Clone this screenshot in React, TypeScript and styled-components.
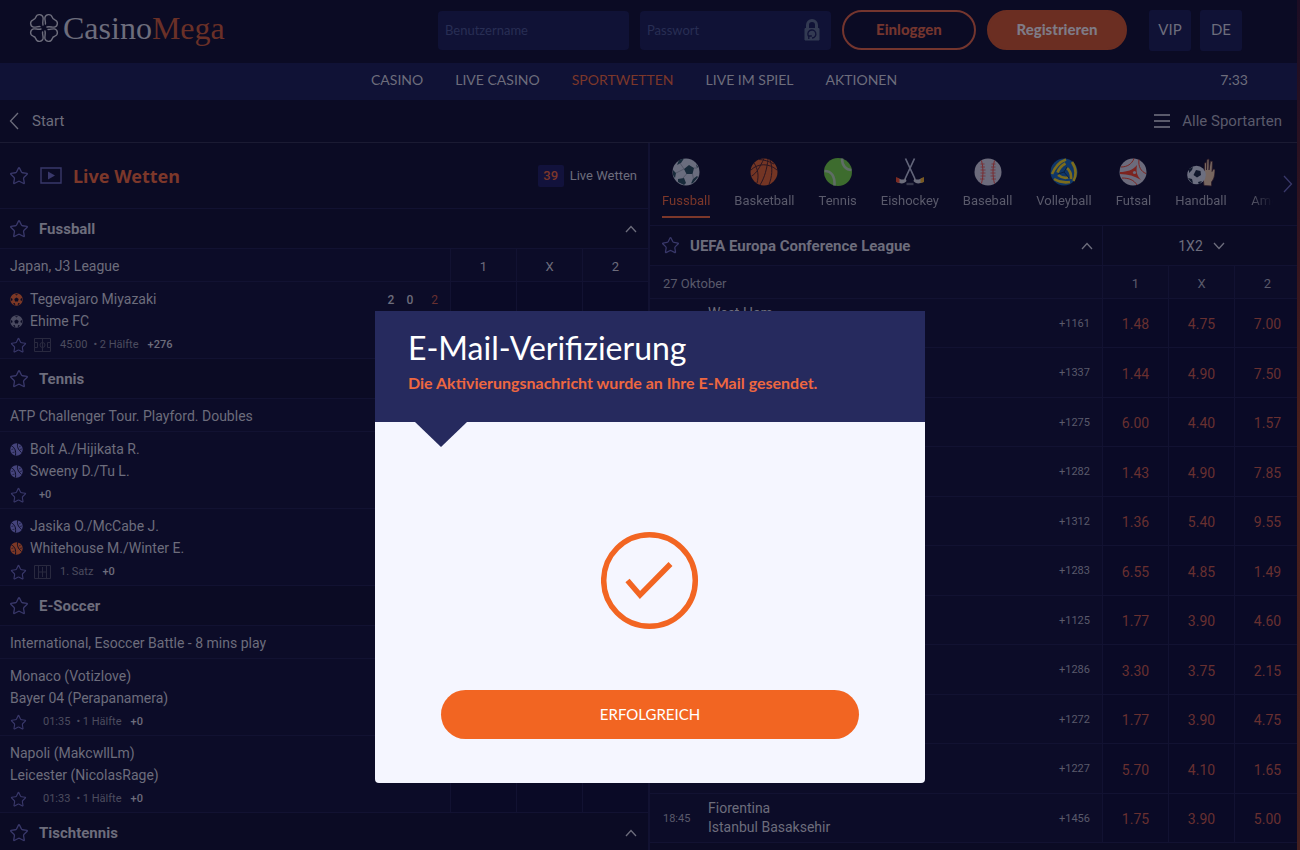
import React from "react";
import styled, { createGlobalStyle, css } from "styled-components";
import { Star } from "lucide-react";

const c = {
  page: "#0b0b24",
  nav: "#101236",
  panel: "#0c0c28",
  odds: "#0a0a26",
  line: "#121232",
  rule: "#1b1b33",
  text: "#6d6d7c",
  soft: "#5a5a6b",
  faint: "#4c4c5f",
  violet: "#39386a",
  orange: "#7c372a",
  odd: "#683030",
  accent: "#f26522",
};

const display = `Lato, "Open Sans", sans-serif`;

const GlobalStyle = createGlobalStyle`
  *, *::before, *::after { box-sizing: border-box; }
  body {
    margin: 0;
    background: ${c.page};
    color: ${c.text};
    font-family: Roboto, "Liberation Sans", sans-serif;
    font-size: 14px;
    overflow: hidden;
  }
  button, input { font: inherit; color: inherit; }
  button { padding: 0; border: 0; background: none; cursor: pointer; }
  a { color: inherit; text-decoration: none; }
  h1, h2, h3, p, ul { margin: 0; padding: 0; }
  ul { list-style: none; }
  svg { display: block; flex: none; }
`;

const Page = styled.div`
  min-height: 100vh;
`;

/* ---------- header ---------- */

const Header = styled.header`
  display: flex;
  align-items: center;
  height: 63px;
  padding: 0 58px 3px 29px;
`;

const Logo = styled.a`
  display: flex;
  align-items: center;
  gap: 4px;
  padding-bottom: 4px;
  font-family: "Liberation Serif", serif;
  font-size: 32px;
  line-height: 40px;
  span span { color: #6a3027; }
`;

const LoginForm = styled.form`
  display: flex;
  align-items: center;
  gap: 11px;
  margin-left: auto;
`;

const Field = styled.label`
  display: flex;
  align-items: center;
  width: 191px;
  height: 39px;
  padding: 0 11px 0 7px;
  border-radius: 4px;
  background: ${c.nav};
  color: #333a52;
  input {
    flex: 1;
    min-width: 0;
    padding: 0;
    border: 0;
    outline: 0;
    background: transparent;
    font-family: ${display};
    font-size: 13px;
  }
  input::placeholder { color: #282e54; opacity: 1; }
`;

const PillButton = styled.button<{ $width: number; $filled?: boolean }>`
  width: ${(p) => p.$width}px;
  height: 40px;
  padding-bottom: 2px;
  border: 2px solid ${(p) => (p.$filled ? "#6b2e22" : "#74352e")};
  border-radius: 20px;
  background: ${(p) => (p.$filled ? "#6b2e22" : "transparent")};
  color: ${(p) => (p.$filled ? "#7f7b86" : "#74352e")};
  font-family: ${display};
  font-size: 15px;
  font-weight: 900;
`;

const SquareLinks = styled.div`
  display: flex;
  gap: 9px;
  margin-left: 22px;
`;

const SquareButton = styled.button`
  width: 42px;
  height: 41px;
  padding-bottom: 2px;
  border-radius: 3px;
  background: ${c.nav};
  font-family: ${display};
  font-size: 15px;
`;

const NavBar = styled.div`
  display: flex;
  align-items: center;
  height: 37px;
  padding: 0 52px 5px 48px;
  background: ${c.nav};
  font-family: ${display};
  font-size: 14px;
`;

const NavList = styled.nav`
  display: flex;
  flex: 1;
  justify-content: center;
  gap: 32px;
`;

const NavLink = styled.a<{ $active?: boolean }>`
  color: ${(p) => (p.$active ? c.orange : c.text)};
`;

const SubBar = styled.div`
  display: flex;
  align-items: center;
  justify-content: space-between;
  height: 43px;
  padding: 0 18px 0 9px;
  border-bottom: 1px solid ${c.rule};
  font-size: 15px;
`;

const SubLink = styled.button<{ $soft?: boolean }>`
  display: flex;
  align-items: center;
  gap: ${(p) => (p.$soft ? 12 : 13)}px;
  color: ${(p) => (p.$soft ? c.soft : c.text)};
`;

/* ---------- panels ---------- */

const Columns = styled.main`
  display: grid;
  grid-template-columns: 1fr 1fr;
`;

const Panel = styled.section<{ $divided?: boolean }>`
  min-width: 0;
  ${(p) => p.$divided && css`border-right: 2px solid ${c.line};`}
`;

const LiveHead = styled.div`
  display: flex;
  align-items: center;
  gap: 11px;
  height: 66px;
  padding: 0 11px 0 9px;
  border-bottom: 1px solid ${c.line};
  h2 {
    flex: 1;
    color: ${c.orange};
    font-family: "Noto Sans", sans-serif;
    font-size: 18px;
    font-weight: 700;
    line-height: 24px;
  }
`;

const LiveCount = styled.span`
  display: flex;
  align-items: center;
  gap: 6px;
  font-size: 13px;
  b {
    width: 26px;
    border-radius: 2px;
    background: #12123c;
    color: ${c.orange};
    line-height: 22px;
    text-align: center;
    font-weight: 500;
  }
`;

const StarButton = styled.button`
  color: ${c.violet};
`;

const SectionHead = styled.div`
  display: flex;
  align-items: center;
  gap: 10px;
  height: 40px;
  padding: 1px 11px 0 9px;
  border-bottom: 1px solid ${c.line};
  h3 {
    flex: 1;
    font-size: 15px;
    font-weight: 700;
  }
`;

const Table = styled.table`
  width: 100%;
  table-layout: fixed;
  border-spacing: 0;
  background: ${c.panel};
  th, td {
    padding: 0;
    border-bottom: 1px solid ${c.line};
    font-weight: 400;
  }
`;

const OddCol = styled.col`
  width: 66px;
`;

const HeadRow = styled.tr<{ $dated?: boolean }>`
  height: 33px;
  th { padding-top: 2px; font-size: 13px; text-align: center; }
  th + th { border-left: 1px solid ${c.line}; }
  th:first-child {
    padding-left: ${(p) => (p.$dated ? 13 : 10)}px;
    font-size: ${(p) => (p.$dated ? 13 : 14)}px;
    text-align: left;
  }
  ${(p) => p.$dated && css`color: ${c.soft};`}
`;

const MatchRow = styled.tr`
  height: 77px;
  td { vertical-align: top; }
  td + td { border-left: 1px solid ${c.line}; background: ${c.odds}; }
`;

const MatchCell = styled.div`
  display: flex;
  justify-content: space-between;
  padding: 6px 12px 0 10px;
`;

const Team = styled.div`
  display: flex;
  align-items: center;
  gap: 7px;
  font-size: 14px;
  line-height: 22px;
`;

const Info = styled.div`
  display: flex;
  align-items: center;
  height: 26px;
  color: ${c.faint};
  font-size: 11px;
  line-height: 26px;
  time { margin-right: 6px; }
`;

const InfoText = styled.span<{ $indent: number }>`
  margin-left: ${(p) => p.$indent}px;
`;

const More = styled.b<{ $indent?: number }>`
  margin-left: ${(p) => p.$indent ?? 9}px;
  color: ${c.text};
  font-weight: 500;
`;

const PitchWrap = styled.span`
  margin-left: 7px;
`;

const Score = styled.div`
  display: flex;
  gap: 12px;
  font-size: 12px;
  font-weight: 500;
  line-height: 24px;
  span:last-child { margin-left: 6px; color: ${c.odd}; font-weight: 400; }
`;

/* ---------- sport tabs ---------- */

const SportBar = styled.div`
  display: flex;
  height: 83px;
  padding: 0 7px 0 12px;
  border-bottom: 1px solid ${c.line};
`;

const SportList = styled.ul`
  display: flex;
  flex: 1;
  min-width: 0;
  gap: 24px;
  overflow: hidden;
  mask-image: linear-gradient(to right, #000 calc(100% - 32px), transparent calc(100% - 10px));
`;

const SportTab = styled.button<{ $active?: boolean }>`
  display: flex;
  flex-direction: column;
  align-items: center;
  height: 75px;
  padding-top: 14px;
  border-bottom: 2px solid ${(p) => (p.$active ? c.orange : "transparent")};
  color: ${(p) => (p.$active ? c.orange : c.soft)};
  font-size: 13px;
  line-height: 28px;
`;

const NextButton = styled.button`
  color: ${c.violet};
`;

const LeagueHead = styled.div`
  display: flex;
  height: 40px;
  border-bottom: 1px solid ${c.line};
`;

const LeagueTitle = styled.div`
  display: flex;
  flex: 1;
  align-items: center;
  gap: 10px;
  padding: 0 9px 0 11px;
  h3 {
    flex: 1;
    font-size: 15px;
    font-weight: 700;
  }
`;

const MarketSelect = styled.button`
  display: flex;
  align-items: center;
  justify-content: center;
  gap: 10px;
  width: 198px;
  border-left: 1px solid ${c.line};
`;

const LeagueRow = styled.tr`
  height: 49px;
  &:nth-child(even) { height: 50px; }
  td + td { border-left: 1px solid ${c.line}; background: ${c.odds}; text-align: center; }
`;

const Fixture = styled.div`
  display: flex;
  align-items: center;
  padding: 0 12px 0 13px;
`;

const Kickoff = styled.time`
  width: 45px;
  color: ${c.soft};
  font-size: 11px;
`;

const Teams = styled.div`
  flex: 1;
  height: 38px;
  line-height: 19px;
`;

const MoreMarkets = styled.a`
  color: ${c.soft};
  font-size: 11px;
`;

const Odd = styled.button`
  padding-top: 2px;
  color: ${c.odd};
  font-size: 14px;
  line-height: 24px;
`;

const PageEdge = styled.div`
  position: fixed;
  top: 0;
  right: 0;
  bottom: 0;
  width: 3px;
  background: linear-gradient(#1d0d24, #35151f 30%, #4a1f1b 50%, #45201f);
`;

/* ---------- dialog ---------- */

const Backdrop = styled.div`
  position: fixed;
  inset: 0;
  display: flex;
  align-items: flex-start;
  justify-content: center;
  padding: 311px 16px 16px;
`;

const Dialog = styled.section`
  width: 100%;
  max-width: 550px;
  border-radius: 0 0 4px 4px;
  background: #f5f6ff;
`;

const DialogHead = styled.header`
  position: relative;
  height: 111px;
  padding: 17px 33px 0;
  background: #262a5e;
  color: #fff;
  font-family: ${display};
  &::after {
    content: "";
    position: absolute;
    top: 100%;
    left: 40px;
    border: solid transparent;
    border-width: 25px 26px 0;
    border-top-color: #262a5e;
  }
  h1 {
    font-size: 32px;
    font-weight: 400;
    line-height: 40px;
  }
  p {
    color: #ee6740;
    font-size: 16px;
    font-weight: 700;
    line-height: 30px;
  }
`;

const DialogBody = styled.div`
  display: flex;
  flex-direction: column;
  align-items: center;
  gap: 60px;
  padding: 109px 66px 44px;
`;

const ConfirmButton = styled.button`
  width: 100%;
  height: 49px;
  padding-bottom: 2px;
  border-radius: 25px;
  background: ${c.accent};
  color: #fff;
  font-family: ${display};
  font-size: 15px;
`;

/* ---------- drawings ---------- */

const leaf =
  "M-1-3C-1.800-6-.6-8-.9-10.400C-1.700-14-7-14.600-8.200-10.800C-8.500-9.500-9.500-8.500-10.800-8.200C-14.600-7-14-1.700-10.400-.9C-8-.6-6-1.800-4-1.400";

const Clover = () => (
  <svg width="30" height="30" viewBox="-15 -15 30 30" fill="none" stroke={c.text} strokeWidth="1.400" strokeLinecap="round">
    {[0, 90, 180, 270].map((a) => (
      <path key={a} d={leaf} transform={`rotate(${a})`} />
    ))}
  </svg>
);

const chevrons = {
  left: { w: 10, h: 18, d: "M9 1L1.500 9 9 17" },
  right: { w: 10, h: 18, d: "M1 1l7.500 8L1 17" },
  up: { w: 12, h: 8, d: "M1 7l5-5.500L11 7" },
  down: { w: 12, h: 8, d: "M1 1l5 5.500L11 1" },
};

const Chevron = ({ to }: { to: keyof typeof chevrons }) => {
  const { w, h, d } = chevrons[to];
  return (
    <svg width={w} height={h} viewBox={`0 0 ${w} ${h}`} fill="none" stroke="currentColor" strokeWidth="1.300">
      <path d={d} />
    </svg>
  );
};

const MenuLines = () => (
  <svg width="16" height="14" viewBox="0 0 16 14" fill="currentColor">
    <path d="M0 0h16v2H0zM0 6h16v2H0zM0 12h16v2H0z" />
  </svg>
);

const Lock = () => (
  <svg width="16" height="22" viewBox="0 0 16 22" fill="none" stroke="currentColor">
    <path d="M3.500 10V6a4.500 4.500 0 0 1 9 0v4" strokeWidth="3" />
    <path d="M1 9.500h14v11.500H1z" fill="currentColor" />
    <path d="M5.200 18A4 4 0 1 1 8 19M4.800 20v-3h3" stroke={c.nav} strokeWidth="1.300" />
  </svg>
);

const PlayBox = () => (
  <svg width="22" height="18" viewBox="0 0 22 18" fill="none" stroke={c.violet} strokeWidth="1.400">
    <path d="M1 1h20v15H1z" />
    <path d="M8 4.500l7 4-7 4z" fill={c.violet} stroke="none" />
  </svg>
);

const Pitch = ({ kind }: { kind: "soccer" | "tennis" }) => (
  <PitchWrap>
    <svg width="17" height="14" viewBox="0 0 17 14" fill="none" stroke="#29293f">
      <path d="M.5.5h16v13H.5z" />
      {kind === "soccer" ? (
        <>
          <path d="M8.500 0v14M.5 4.500h3v5h-3M16.500 4.500h-3v5h3" />
          <circle cx="8.500" cy="7" r="2.500" />
        </>
      ) : (
        <path d="M4.500 0v14M12.500 0v14M8.500 2v10M4.500 7h8" />
      )}
    </svg>
  </PitchWrap>
);

type BallKind = "soccer" | "tennis";

const SmallBall = ({ kind, color }: { kind: BallKind; color: string }) => (
  <svg width="13" height="13" viewBox="0 0 13 13" fill="none">
    <circle cx="6.500" cy="6.500" r="6.200" fill={color} />
    {kind === "soccer" ? (
      <g fill={c.page}>
        <path d="M6.500 4.400l2.200 1.600-.8 2.500H5.100L4.300 6z" />
        <path d="M5 1.200h3L6.500 2.600zM1 5l1.600 1L2 8.200.8 7zM12 5l-1.600 1 .6 2.200L12.200 7zM3 10.500l1.600-.6.8 1.600-.8.6zM10 10.500l-1.600-.6-.8 1.600.8.6z" />
      </g>
    ) : (
      <g stroke={c.page} strokeWidth="1">
        <path d="M1.500 3c3.500 1.500 4.500 5 4 9.500M8 0c-1.500 3 0 6.500 3.500 9.500" />
        <path d="M1.500 6.500l2-.6M2.500 9.500l2-.3M9 4l1.800-1M10 6.500l2-.6" strokeWidth=".6" />
      </g>
    )}
  </svg>
);

const SportIcon = ({ name }: { name: string }) => (
  <svg width="28" height="30" viewBox="0 0 28 30" fill="none">
    {name === "Fussball" && (
      <>
        <circle cx="14" cy="15" r="13.500" fill="#6a6d7e" />
        <g fill="#182a3a">
          <path d="M17 8l5 3-1.500 6h-6L12 12zM7 3l5-1.500L9 6 5 8zM1 13l3 3-1 5-2-3zM6 22l6-1 2 5-2 2-6-3zM21 22l4-3 1 1-5 6-2 .5zM24 7l2 3-1 1z" />
        </g>
        <path d="M12 12L8 6M14.500 17L11 21M20.500 17l1 5M22 11l3 0M4 16l8-4" stroke="#4d5062" strokeWidth=".8" />
      </>
    )}
    {name === "Basketball" && (
      <>
        <circle cx="14" cy="15" r="13.500" fill="#743524" />
        <path d="M18 2C17 11 15 20 10 28M1 13C8 6 19 6 27 13M4 6c4 6 5 13 3 20M14 1.500C10 10 6 17 1.500 19M20 3c3 8 2 17-1 24.500M9 2.500c5 0 10 2 15 4.500" stroke="#2a1622" />
      </>
    )}
    {name === "Tennis" && (
      <>
        <circle cx="14" cy="15" r="14" fill="#3d6c2e" />
        <path d="M18 1.500c0 7 4 11.500 9.500 11.500M.5 14c7 0 10.500 5 10 14.500" stroke="#5f6d66" strokeWidth="2.600" />
      </>
    )}
    {name === "Eishockey" && (
      <>
        <path d="M9.500 1.500L19 22M18.500 1.500L9 22" stroke="#62657a" strokeWidth="1.700" />
        <path d="M9.500 21c-2 3-5 1-9 0v4c4 2 8 2 10-1zM18.500 21c2 3 5 1 9 0v4c-4 2-8 2-10-1z" fill="#6d6e7c" />
        <path d="M0 20l3.500 1.500v4.500L0 25z" fill="#7c2a22" />
        <path d="M24.500 21.500L28 20v5l-3.500 1z" fill="#7a5a22" />
        <path d="M10.500 27h7" stroke="#35364a" strokeWidth="2.400" />
      </>
    )}
    {name === "Baseball" && (
      <>
        <circle cx="14" cy="15" r="13.500" fill="#6c6b7c" />
        <path d="M7.500 3.500c2 7 2 16 0 23M20.500 3.500c-2 7-2 16 0 23" stroke="#7a2c30" />
        <path d="M6.500 7h4M6.500 10h4.500M6.500 13h5M6.500 16h5M6.500 19h5M6 22h4.500M17.500 7h4M17 10h4.500M16.500 13h5M16.500 16h5M16.500 19h5M17.500 22h4.500" stroke="#7a2c30" strokeWidth=".8" />
      </>
    )}
    {name === "Volleyball" && (
      <>
        <circle cx="14" cy="15" r="13.500" fill="#0f3668" />
        <path d="M2 17C5 10 9 5 16 2.500M7.500 15.500c1.500-4 4-7 8-9" stroke="#7c6c1c" strokeWidth="2.600" />
        <path d="M22 5c4 6 4.500 13 1.500 19M17 11c3.500 3 4.500 6 4 11" stroke="#7c6c1c" strokeWidth="2.600" />
        <path d="M4 22c5 3 10 4 16 3M8 18c4 3 7 3.500 10 2.500" stroke="#7c6c1c" strokeWidth="2.600" />
        <path d="M17 10l-3 5-6 2M14 15l5 6" stroke="#0a1f40" />
      </>
    )}
    {name === "Futsal" && (
      <>
        <circle cx="14" cy="15" r="13.500" fill="#6c6b7c" />
        <path d="M1 15c7 0 13-2 17-7-1 6-.5 10 4 15-6-4-13-6-21-6z" fill="#7c2420" />
        <path d="M2 10c6 0 11-3 13-8.500M20 2.500c-1 7 2 12 7 14M3 21c7 0 12 2 15 7" stroke="#7c2420" />
        <circle cx="15.500" cy="15.500" r="1.600" fill="#6c6b7c" />
      </>
    )}
    {name === "Handball" && (
      <>
        <path d="M17 28.500l-1-9 1.500-3V6l2-.5V13l.5-10.500 2-.5v11l1.500-9 2 .5-.5 10 1.500-2.500 1.500.5c0 7-1.500 10-3.500 12.500v4z" fill="#77665f" stroke="#2c1c2a" strokeWidth=".8" />
        <circle cx="9.500" cy="18" r="9.300" fill="#6c6f80" />
        <path d="M9 13l4.500 1 .5 4-4 2.500L6.500 18zM2 12l4-2-1 3-3 3zM1 21l4 1 1 4-2-1zM11 25l4-1-3 3.500z" fill="#10182c" />
      </>
    )}
  </svg>
);

/* ---------- data ---------- */

interface Match {
  home: string;
  away: string;
  ball?: BallKind;
  colors?: [string, string];
  pitch?: BallKind;
  time?: string;
  phase?: string;
  more: string;
  score?: string[];
}

interface Section {
  title: string;
  league?: string;
  matches: Match[];
}

const violetBall = "#45447c";
const orangeBall = "#7c3826";

const sections: Section[] = [
  {
    title: "Fussball",
    league: "Japan, J3 League",
    matches: [
      {
        home: "Tegevajaro Miyazaki", away: "Ehime FC", ball: "soccer", colors: [orangeBall, "#4a4a60"],
        pitch: "soccer", time: "45:00", phase: "• 2 Hälfte", more: "+276", score: ["2", "0", "2"],
      },
    ],
  },
  {
    title: "Tennis",
    league: "ATP Challenger Tour. Playford. Doubles",
    matches: [
      { home: "Bolt A./Hijikata R.", away: "Sweeny D./Tu L.", ball: "tennis", colors: [violetBall, violetBall], more: "+0" },
      {
        home: "Jasika O./McCabe J.", away: "Whitehouse M./Winter E.", ball: "tennis",
        colors: [violetBall, orangeBall], pitch: "tennis", phase: "1. Satz", more: "+0",
      },
    ],
  },
  {
    title: "E-Soccer",
    league: "International, Esoccer Battle - 8 mins play",
    matches: [
      { home: "Monaco (Votizlove)", away: "Bayer 04 (Perapanamera)", time: "01:35", phase: "• 1 Hälfte", more: "+0" },
      { home: "Napoli (MakcwllLm)", away: "Leicester (NicolasRage)", time: "01:33", phase: "• 1 Hälfte", more: "+0" },
    ],
  },
  { title: "Tischtennis", matches: [] },
];

const sports = [
  "Fussball", "Basketball", "Tennis", "Eishockey", "Baseball", "Volleyball", "Futsal", "Handball", "Ame",
];

interface FixtureData {
  time?: string;
  home?: string;
  away?: string;
  more: string;
  odds: string[];
}

const fixtures: FixtureData[] = [
  { home: "West Ham", more: "+1161", odds: ["1.48", "4.75", "7.00"] },
  { more: "+1337", odds: ["1.44", "4.90", "7.50"] },
  { more: "+1275", odds: ["6.00", "4.40", "1.57"] },
  { more: "+1282", odds: ["1.43", "4.90", "7.85"] },
  { more: "+1312", odds: ["1.36", "5.40", "9.55"] },
  { more: "+1283", odds: ["6.55", "4.85", "1.49"] },
  { more: "+1125", odds: ["1.77", "3.90", "4.60"] },
  { more: "+1286", odds: ["3.30", "3.75", "2.15"] },
  { more: "+1272", odds: ["1.77", "3.90", "4.75"] },
  { more: "+1227", odds: ["5.70", "4.10", "1.65"] },
  { time: "18:45", home: "Fiorentina", away: "Istanbul Basaksehir", more: "+1456", odds: ["1.75", "3.90", "5.00"] },
];

const outcomes = ["1", "X", "2"];

/* ---------- parts ---------- */

const Favourite = ({ size = 20 }: { size?: number }) => (
  <StarButton type="button" aria-label="Favorit">
    <Star size={size} strokeWidth={1.6} />
  </StarButton>
);

const OddColumns = () => (
  <colgroup>
    <col />
    {outcomes.map((o) => <OddCol key={o} />)}
  </colgroup>
);

const LiveMatch = ({ m }: { m: Match }) => (
  <MatchRow>
    <td>
      <MatchCell>
        <div>
          {[m.home, m.away].map((name, i) => (
            <Team key={name}>
              {m.ball && m.colors && <SmallBall kind={m.ball} color={m.colors[i]} />}
              {name}
            </Team>
          ))}
          <Info>
            <Favourite size={17} />
            {m.pitch && <Pitch kind={m.pitch} />}
            {m.phase && (
              <InfoText $indent={m.pitch ? 9 : 16}>
                {m.time && <time>{m.time}</time>}
                {m.phase}
              </InfoText>
            )}
            <More $indent={m.phase ? 9 : 12}>{m.more}</More>
          </Info>
        </div>
        {m.score && <Score>{m.score.map((s, i) => <span key={i}>{s}</span>)}</Score>}
      </MatchCell>
    </td>
    {outcomes.map((o) => <td key={o} />)}
  </MatchRow>
);

const LiveSection = ({ s }: { s: Section }) => (
  <section>
    <SectionHead>
      <Favourite />
      <h3>{s.title}</h3>
      <button type="button" aria-label={`${s.title} einklappen`}><Chevron to="up" /></button>
    </SectionHead>
    {s.league && (
      <Table>
        <OddColumns />
        <thead>
          <HeadRow>
            <th scope="col">{s.league}</th>
            {outcomes.map((o) => <th key={o} scope="col">{o}</th>)}
          </HeadRow>
        </thead>
        <tbody>{s.matches.map((m) => <LiveMatch key={m.home} m={m} />)}</tbody>
      </Table>
    )}
  </section>
);

export default function App() {
  return (
    <Page>
      <GlobalStyle />
      <Header>
        <Logo href="#">
          <Clover />
          <span>Casino<span>Mega</span></span>
        </Logo>
        <LoginForm onSubmit={(e) => e.preventDefault()}>
          <Field><input aria-label="Benutzername" placeholder="Benutzername" /></Field>
          <Field><input aria-label="Passwort" type="password" placeholder="Passwort" /><Lock /></Field>
          <PillButton $width={134}>Einloggen</PillButton>
          <PillButton $width={140} $filled type="button">Registrieren</PillButton>
        </LoginForm>
        <SquareLinks>
          <SquareButton type="button">VIP</SquareButton>
          <SquareButton type="button">DE</SquareButton>
        </SquareLinks>
      </Header>
      <NavBar>
        <NavList>
          <NavLink href="#">CASINO</NavLink>
          <NavLink href="#">LIVE CASINO</NavLink>
          <NavLink href="#" $active>SPORTWETTEN</NavLink>
          <NavLink href="#">LIVE IM SPIEL</NavLink>
          <NavLink href="#">AKTIONEN</NavLink>
        </NavList>
        <time>7:33</time>
      </NavBar>
      <SubBar>
        <SubLink type="button"><Chevron to="left" />Start</SubLink>
        <SubLink type="button" $soft><MenuLines />Alle Sportarten</SubLink>
      </SubBar>

      <Columns>
        <Panel $divided>
          <LiveHead>
            <Favourite />
            <PlayBox />
            <h2>Live Wetten</h2>
            <LiveCount><b>39</b>Live Wetten</LiveCount>
          </LiveHead>
          {sections.map((s) => <LiveSection key={s.title} s={s} />)}
        </Panel>

        <Panel>
          <SportBar>
            <SportList>
              {sports.map((name, i) => (
                <li key={name}>
                  <SportTab type="button" $active={i === 0}>
                    <SportIcon name={name} />
                    {name}
                  </SportTab>
                </li>
              ))}
            </SportList>
            <NextButton type="button" aria-label="Weitere Sportarten"><Chevron to="right" /></NextButton>
          </SportBar>
          <LeagueHead>
            <LeagueTitle>
              <Favourite size={19} />
              <h3>UEFA Europa Conference League</h3>
              <button type="button" aria-label="Liga einklappen"><Chevron to="up" /></button>
            </LeagueTitle>
            <MarketSelect type="button">1X2<Chevron to="down" /></MarketSelect>
          </LeagueHead>
          <Table>
            <OddColumns />
            <thead>
              <HeadRow $dated>
                <th scope="col">27 Oktober</th>
                {outcomes.map((o) => <th key={o} scope="col">{o}</th>)}
              </HeadRow>
            </thead>
            <tbody>
              {fixtures.map((f) => (
                <LeagueRow key={f.more}>
                  <td>
                    <Fixture>
                      <Kickoff>{f.time}</Kickoff>
                      <Teams>
                        <div>{f.home}</div>
                        <div>{f.away}</div>
                      </Teams>
                      <MoreMarkets href="#">{f.more}</MoreMarkets>
                    </Fixture>
                  </td>
                  {f.odds.map((o, i) => <td key={i}><Odd type="button">{o}</Odd></td>)}
                </LeagueRow>
              ))}
            </tbody>
          </Table>
        </Panel>
      </Columns>
      <PageEdge />

      <Backdrop>
        <Dialog role="dialog" aria-modal="true" aria-labelledby="dialog-title">
          <DialogHead>
            <h1 id="dialog-title">E-Mail-Verifizierung</h1>
            <p>Die Aktivierungsnachricht wurde an Ihre E-Mail gesendet.</p>
          </DialogHead>
          <DialogBody>
            <svg width="98" height="99" viewBox="0 0 98 99" fill="none" stroke={c.accent} strokeWidth="5.500">
              <circle cx="48.500" cy="49.500" r="45.800" />
              <path d="M26.500 49.500L39 64 69.500 33" />
            </svg>
            <ConfirmButton type="button">ERFOLGREICH</ConfirmButton>
          </DialogBody>
        </Dialog>
      </Backdrop>
    </Page>
  );
}
